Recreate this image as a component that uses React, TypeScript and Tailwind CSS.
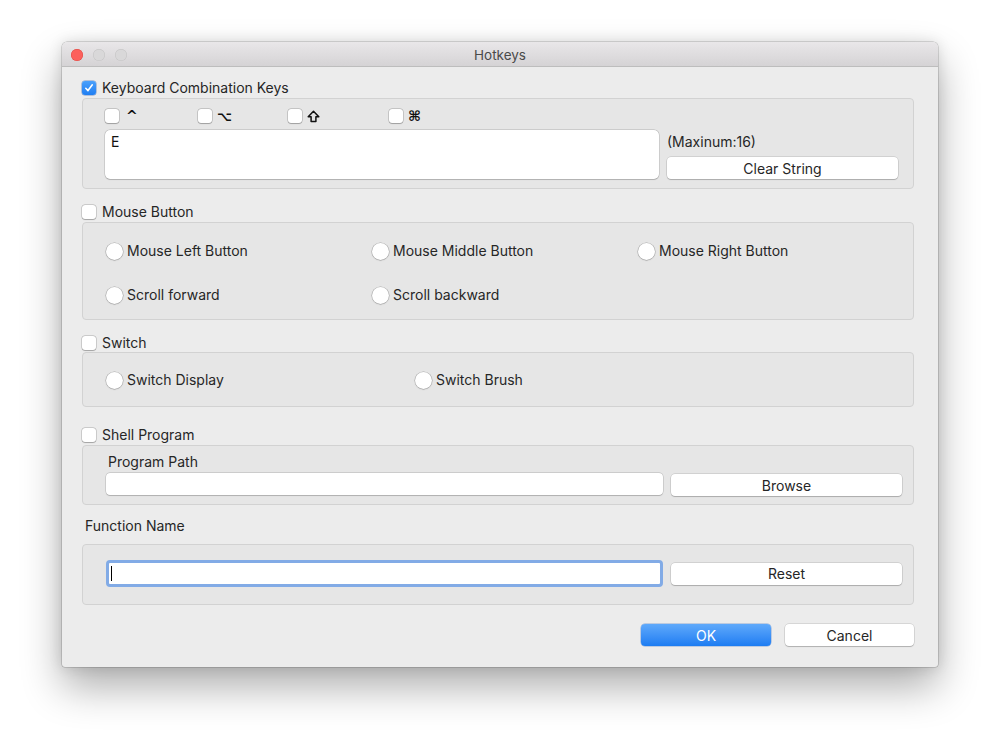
import React from "react";

const font = { fontFamily: "Inter, 'Liberation Sans', sans-serif" };
const sym = { fontFamily: "'DejaVu Sans', sans-serif" };

function Check({ checked = false }: { checked?: boolean }) {
  if (checked) {
    return (
      <div className="w-[14px] h-[14px] rounded-[3px] bg-gradient-to-b from-[#4aa0fb] to-[#1f7ef2] flex items-center justify-center shrink-0 shadow-[0_0_0_0.5px_rgba(0,60,160,0.5)]">
        <svg width="10" height="10" viewBox="0 0 10 10">
          <path d="M1.8 5.3 L4 7.6 L8.3 1.8" fill="none" stroke="white" strokeWidth="1.6" strokeLinecap="round" strokeLinejoin="round" />
        </svg>
      </div>
    );
  }
  return (
    <div className="w-[14px] h-[14px] rounded-[3px] bg-white shrink-0 shadow-[0_0_0_0.5px_rgba(0,0,0,0.25),0_0.5px_1px_rgba(0,0,0,0.2)]" />
  );
}

function Radio() {
  return (
    <div className="w-[17px] h-[17px] rounded-full bg-white shrink-0 shadow-[0_0_0_0.5px_rgba(0,0,0,0.25),0_0.5px_1.5px_rgba(0,0,0,0.2)]" />
  );
}

function Btn({ children, className = "" }: { children: React.ReactNode; className?: string }) {
  return (
    <div
      className={
        "h-[22px] rounded-[4px] bg-white flex items-center justify-center text-[14px] text-[#262626] shadow-[0_0_0_0.5px_rgba(0,0,0,0.18),0_1px_1px_rgba(0,0,0,0.18)] " +
        className
      }
    >
      {children}
    </div>
  );
}

function Header({ label, checked = false }: { label: string; checked?: boolean }) {
  return (
    <div className="h-[16px] flex items-center gap-[6px]">
      <Check checked={checked} />
      <span className="text-[14px] text-[#262626] leading-none">{label}</span>
    </div>
  );
}

function Group({ children, className = "" }: { children: React.ReactNode; className?: string }) {
  return (
    <div className={"rounded-[4px] border border-[#d2d2d2] bg-[#e6e6e6] " + className}>
      {children}
    </div>
  );
}

function RadioItem({ label, w }: { label: string; w: string }) {
  return (
    <div className={"flex items-center gap-[4px] " + w}>
      <Radio />
      <span className="text-[14px] text-[#262626] leading-none">{label}</span>
    </div>
  );
}

export default function App() {
  return (
    <div className="w-[1000px] h-[749px] bg-white pt-[42px] pl-[62px]" style={font}>
      <div className="w-[876px] h-[625px] rounded-t-[5px] rounded-b-[3px] bg-[#ececec] flex flex-col shadow-[0_0_0_0.5px_rgba(0,0,0,0.25),0_20px_40px_rgba(0,0,0,0.32),0_0_14px_rgba(0,0,0,0.12)] overflow-hidden">
        {/* title bar */}
        <div className="h-[25px] shrink-0 bg-gradient-to-b from-[#e9e7e9] to-[#d5d3d5] border-b border-[#bdbdbd] flex items-center relative">
          <div className="flex items-center gap-[10px] pl-[9px] pt-[1px]">
            <div className="w-[12px] h-[12px] rounded-full bg-[#fc605c] shadow-[inset_0_0_0_0.5px_#de4a44]" />
            <div className="w-[12px] h-[12px] rounded-full bg-[#d9d8d9] shadow-[inset_0_0_0_0.5px_#c3c2c3]" />
            <div className="w-[12px] h-[12px] rounded-full bg-[#d9d8d9] shadow-[inset_0_0_0_0.5px_#c3c2c3]" />
          </div>
          <div className="absolute inset-0 flex items-center justify-center pt-[2px] text-[13.5px] text-[#4a4a4a]">Hotkeys</div>
        </div>

        {/* content */}
        <div className="flex flex-col pl-[20px] pr-[24px]">
          {/* Keyboard */}
          <div className="mt-[13px]">
            <Header label="Keyboard Combination Keys" checked />
          </div>
          <Group className="mt-[2px] h-[91px] pl-[22px] pr-[14px] pt-[9px]">
            <div className="flex items-center h-[16px] text-[13px] text-[#111]">
              <div className="flex items-center gap-[7px] w-[93px]">
                <Check />
                <span className="font-bold leading-none text-[14px]" style={sym}>^</span>
              </div>
              <div className="flex items-center gap-[5px] w-[90px]">
                <Check />
                <span className="font-bold leading-none text-[13px]" style={sym}>⌥</span>
              </div>
              <div className="flex items-center gap-[5px] w-[101px]">
                <Check />
                <svg width="13" height="13" viewBox="0 0 13 13" className="mt-[1px]">
                  <path d="M6.5 1.3 L11.8 6.8 L8.9 6.8 L8.9 11.5 L4.1 11.5 L4.1 6.8 L1.2 6.8 Z" fill="none" stroke="#111" strokeWidth="1.5" strokeLinejoin="round" />
                </svg>
              </div>
              <div className="flex items-center gap-[5px]">
                <Check />
                <span className="font-bold leading-none text-[14px]" style={sym}>⌘</span>
              </div>
            </div>
            <div className="flex mt-[6px]">
              <div className="w-[554px] h-[49px] bg-white rounded-[5px] shadow-[0_0_0_0.5px_rgba(0,0,0,0.2),0_0.5px_1px_rgba(0,0,0,0.15)] px-[6px] pt-[1px] text-[14px] text-[#111]">
                E
              </div>
              <div className="ml-[8px] w-[231px] flex flex-col">
                <div className="h-[22px] flex items-center text-[14px] text-[#262626]">(Maxinum:16)</div>
                <Btn className="mt-[5px]">Clear String</Btn>
              </div>
            </div>
          </Group>

          {/* Mouse */}
          <div className="mt-[15px]">
            <Header label="Mouse Button" />
          </div>
          <Group className="mt-[2px] h-[98px] pl-[23px] pt-[18px]">
            <div className="flex items-center h-[20px]">
              <RadioItem label="Mouse Left Button" w="w-[266px]" />
              <RadioItem label="Mouse Middle Button" w="w-[266px]" />
              <RadioItem label="Mouse Right Button" w="w-[266px]" />
            </div>
            <div className="flex items-center h-[20px] mt-[24px]">
              <RadioItem label="Scroll forward" w="w-[266px]" />
              <RadioItem label="Scroll backward" w="w-[266px]" />
            </div>
          </Group>

          {/* Switch */}
          <div className="mt-[15px]">
            <Header label="Switch" />
          </div>
          <Group className="mt-[1px] h-[55px] pl-[23px] pt-[17px]">
            <div className="flex items-center h-[20px]">
              <RadioItem label="Switch Display" w="w-[309px]" />
              <RadioItem label="Switch Brush" w="w-[266px]" />
            </div>
          </Group>

          {/* Shell */}
          <div className="mt-[20px]">
            <Header label="Shell Program" />
          </div>
          <Group className="mt-[2px] h-[60px] pl-[23px] pt-[7px]">
            <div className="h-[16px] flex items-center pl-[2px] text-[14px] text-[#262626]">Program Path</div>
            <div className="flex items-start mt-[4px]">
              <div className="w-[557px] h-[22px] bg-white rounded-[4px] shadow-[0_0_0_0.5px_rgba(0,0,0,0.2),0_0.5px_1px_rgba(0,0,0,0.15)]" />
              <Btn className="ml-[8px] w-[231px] mt-[1px]">Browse</Btn>
            </div>
          </Group>

          {/* Function Name */}
          <div className="mt-[12px] h-[16px] flex items-center pl-[3px] text-[14px] text-[#262626]">Function Name</div>
          <Group className="mt-[11px] h-[61px] pl-[23px] pt-[15px]">
            <div className="flex items-center">
              <div className="w-[557px] h-[27px] bg-white rounded-[4px] border-[3px] border-[#82abe6] flex items-center pl-[2px]">
                <div className="w-[1px] h-[15px] bg-black" />
              </div>
              <Btn className="ml-[8px] w-[231px]">Reset</Btn>
            </div>
          </Group>

          {/* bottom buttons */}
          <div className="flex justify-end mt-[19px]">
            <div className="w-[130px] h-[22px] rounded-[4px] bg-gradient-to-b from-[#5ea9fb] to-[#1b7cf2] flex items-center justify-center text-[14px] text-white shadow-[0_0_0_0.5px_rgba(0,70,180,0.4)]">
              OK
            </div>
            <Btn className="ml-[14px] w-[129px]">Cancel</Btn>
          </div>
        </div>
      </div>
    </div>
  );
}
